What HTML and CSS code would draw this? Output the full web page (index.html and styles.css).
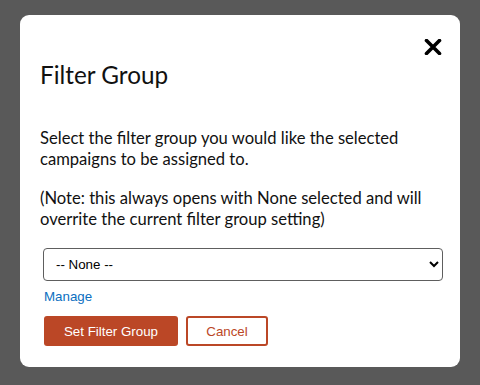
FILE: index.html
```html
<!DOCTYPE html>
<html>
<head>
<meta charset="utf-8">
<link rel="stylesheet" href="styles.css">
</head>
<body>
<div class="modal">
  <button class="close" aria-label="Close">
    <svg width="18" height="16" viewBox="0 0 18 16"><path d="M2.5 1.5 L15.5 14.5 M15.5 1.5 L2.5 14.5" stroke="#000" stroke-width="3.6" stroke-linecap="round"/></svg>
  </button>
  <h2 class="title">Filter Group</h2>
  <p class="text">Select the filter group you would like the selected campaigns to be assigned to.</p>
  <p class="text note">(Note: this always opens with None selected and will overrite the current filter group setting)</p>
  <div class="form">
    <select class="select"><option>-- None --</option></select>
    <a class="manage" href="#">Manage</a>
    <div class="actions">
      <button class="btn primary">Set Filter Group</button>
      <button class="btn secondary">Cancel</button>
    </div>
  </div>
</div>
</body>
</html>
```
FILE: styles.css
```css
html, body { margin: 0; padding: 0; }
body {
  background: #595959;
  width: 480px;
  height: 385px;
  padding-top: 15px;
  box-sizing: border-box;
}
.modal {
  position: relative;
  margin-left: 20px;
  width: 440px;
  height: 352px;
  background: #fff;
  border-radius: 9px;
  padding: 0 20px;
  box-sizing: border-box;
  font-family: Lato, "Noto Sans", sans-serif;
  color: #111;
}
.close {
  position: absolute;
  top: 24px;
  left: 404px;
  border: 0;
  background: none;
  padding: 0;
  width: 18px;
  height: 16px;
  display: block;
}
.close svg { display: block; }
.title {
  margin: 0;
  padding-top: 45px;
  font-size: 24.3px;
  font-weight: 400;
  line-height: 30px;
}
.text {
  margin: 0;
  font-size: 16.6px;
  line-height: 21px;
}
.title + .text { margin-top: 38px; }
.note { margin-top: 18px; }
.form {
  margin-top: 18px;
  padding-left: 3px;
  font-family: "Liberation Sans", Arial, sans-serif;
}
.select {
  display: block;
  width: 400px;
  height: 33px;
  border: 1px solid #5e5e5e;
  border-radius: 4px;
  background: #fff;
  font-family: "Liberation Sans", Arial, sans-serif;
  font-size: 13.33px;
  color: #000;
  padding: 0 8px;
}
.manage {
  display: block;
  margin-top: 8px;
  margin-left: 1px;
  font-size: 13.33px;
  line-height: 16px;
  color: #0b6fbf;
  text-decoration: none;
}
.actions {
  display: flex;
  gap: 8px;
  margin-top: 11px;
  margin-left: 1px;
}
.btn {
  height: 30px;
  border-radius: 3px;
  font-family: "Liberation Sans", Arial, sans-serif;
  font-size: 13.33px;
  padding: 0;
}
.primary {
  width: 134px;
  background: #bb4726;
  border: 0;
  color: #fff;
}
.secondary {
  width: 82px;
  background: #fff;
  border: 2px solid #bb4726;
  color: #bb4726;
}
```
